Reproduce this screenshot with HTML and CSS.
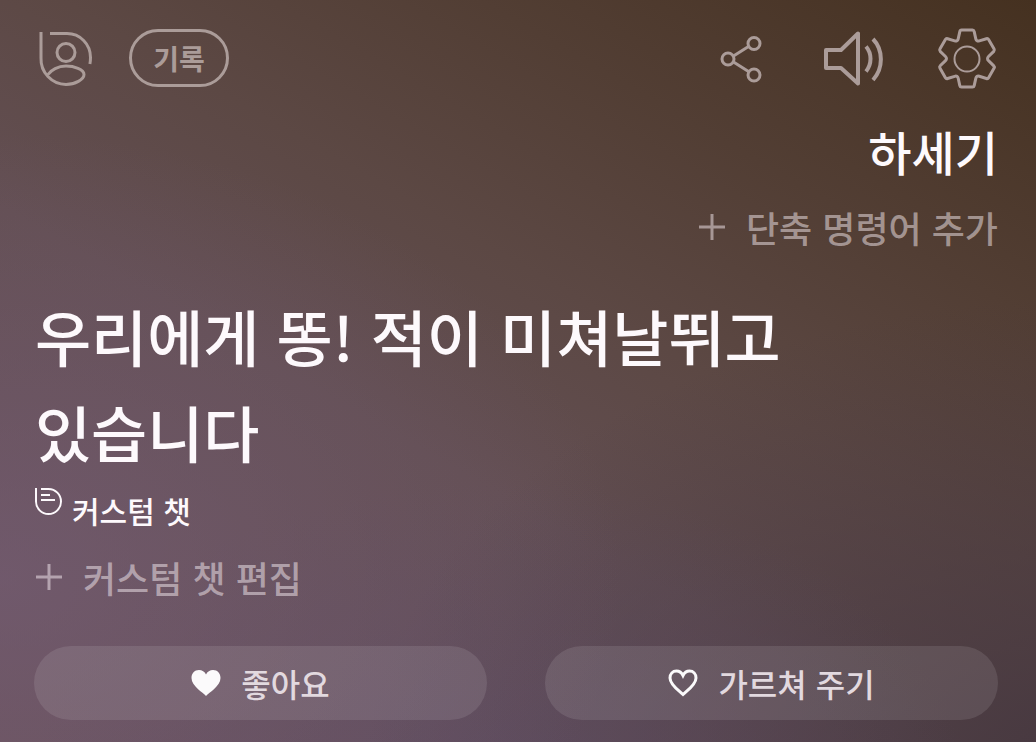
FILE: index.html
```html
<!DOCTYPE html>
<html lang="ko">
<head>
<meta charset="utf-8">
<meta name="viewport" content="width=device-width, initial-scale=1">
<title>커스텀 챗</title>
<link rel="stylesheet" href="styles.css">
</head>
<body>
<main class="screen">
  <header class="topbar">
    <div class="topbar-group">
      <button class="icon-button" type="button" aria-label="프로필">
        <svg width="56" height="60" viewBox="0 0 56 60" class="line">
          <path d="M3 4V30a25.500 25.500 0 0 0 25 26.500c9 0 18-5 18-10S36 38 28 38s-15 4-18 8.500"/>
          <path d="M12 5.500h17c13 0 23.500 10.500 23.500 24 0 2.500-.2 4.500-.6 6.500"/>
          <circle cx="28" cy="24.500" r="9"/>
        </svg>
      </button>
      <button class="history" type="button">기록</button>
    </div>
    <div class="topbar-group topbar-actions">
      <button class="icon-button" type="button" aria-label="공유">
        <svg width="48" height="60" viewBox="0 0 48 60" class="line">
          <circle cx="8" cy="31" r="6"/>
          <circle cx="34" cy="15.500" r="6"/>
          <circle cx="34" cy="47" r="6"/>
          <path d="M13.500 28 28.500 18.500M13.500 34l15 9.500"/>
        </svg>
      </button>
      <button class="icon-button" type="button" aria-label="소리">
        <svg width="62" height="60" viewBox="0 0 62 60" class="line speaker">
          <path d="M4 22h15L36 5.500v50L19 40H4z"/>
          <path d="M44 18.500c6 7 6 17.500 0 25M51 11c10.500 11 10.500 29.500 0 41"/>
        </svg>
      </button>
      <button class="icon-button" type="button" aria-label="설정">
        <svg width="60" height="60" viewBox="1 0 60 60" class="line">
          <path d="M24.500 2h11c1 0 1.500.7 1.700 1.600l1.600 7.300c.4 1.800 1.700 2.600 3.500 2l7.100-2.200c1-.3 1.700 0 2.200.8l5.500 9.600c.5.900.4 1.600-.3 2.300l-5.300 5.100c-1.300 1.300-1.300 3 0 4.200l5.300 5.100c.7.700.8 1.500.3 2.300l-5.500 9.600c-.5.900-1.200 1.100-2.200.8l-7.100-2.200c-1.800-.6-3.100.2-3.500 2l-1.600 7.300c-.2.900-.7 1.500-1.700 1.500h-11c-1 0-1.500-.6-1.700-1.500l-1.600-7.300c-.4-1.800-1.700-2.600-3.500-2l-7.100 2.200c-1 .3-1.700 0-2.200-.8l-5.500-9.600c-.5-.9-.4-1.600.3-2.300l5.300-5.100c1.300-1.300 1.300-3 0-4.200l-5.300-5.100c-.7-.7-.8-1.500-.3-2.300l5.500-9.600c.5-.9 1.200-1.100 2.200-.8l7.100 2.200c1.800.6 3.100-.2 3.500-2l1.600-7.300c.2-.9.700-1.600 1.700-1.600z"/>
          <circle class="hub" cx="30" cy="31" r="12.500"/>
        </svg>
      </button>
    </div>
  </header>

  <section class="query">
    <p class="query-text">하세기</p>
    <button class="add" type="button">
      <svg width="28" height="28" viewBox="0 0 28 28" class="plus"><path d="M14 1v26M1 14h26"/></svg>
      단축 명령어 추가
    </button>
  </section>

  <section class="answer">
    <h1 class="answer-text">우리에게 똥! 적이 미쳐날뛰고 있습니다</h1>
    <p class="source">
      <svg width="27" height="28" viewBox="0 0 27 28" class="badge">
        <path d="M1 0v13.500a12.500 12.500 0 1 0 12.500-12.500H6M6 7h9M6 12h14"/>
      </svg>
      <span class="source-name">커스텀 챗</span>
    </p>
    <button class="add" type="button">
      <svg width="28" height="28" viewBox="0 0 28 28" class="plus"><path d="M14 1v26M1 14h26"/></svg>
      커스텀 챗 편집
    </button>
  </section>

  <footer class="feedback">
    <button class="pill" type="button">
      <svg width="30" height="28" viewBox="0 0 30 28" class="heart heart-full"><path d="M15 27C12 23.500.5 17 .5 9 .5 4.500 3.500 1 8 1c3 0 5.700 1.500 7 4.500C16.300 2.500 19 1 22 1c4.500 0 7.500 3.500 7.500 8 0 8-11.500 14.500-14.500 18z"/></svg>
      좋아요
    </button>
    <button class="pill" type="button">
      <svg width="30" height="28" viewBox="0 0 30 28" class="heart"><path d="M15 25.500C12 22.500 2 16 2 9c0-4 2.700-7 6.500-7 3 0 5.200 1.800 6.500 4.500C16.300 3.800 18.500 2 21.500 2 25.300 2 28 5 28 9c0 7-10 13.500-13 16.500z"/></svg>
      가르쳐 주기
    </button>
  </footer>
</main>
</body>
</html>
```
FILE: styles.css
```css
* {
  box-sizing: border-box;
}

body {
  margin: 0;
  font-family: "Noto Sans CJK KR", sans-serif;
  font-weight: 500;
  color: #fdf9fc;
}

button {
  margin: 0;
  padding: 0;
  border: 0;
  background: none;
  font: inherit;
  color: inherit;
  cursor: pointer;
}

p,
h1 {
  margin: 0;
}

svg {
  display: block;
  flex: none;
  overflow: visible;
  fill: none;
  stroke: currentColor;
}

.screen {
  display: flex;
  flex-direction: column;
  min-height: 100vh;
  padding: 28px 38px 22px 34px;
  background:
    radial-gradient(ellipse 60% 60% at 0% 78%, rgba(118, 94, 120, 0.6), rgba(118, 94, 120, 0)),
    radial-gradient(ellipse 45% 40% at 48% 105%, rgba(92, 76, 102, 0.6), rgba(92, 76, 102, 0)),
    radial-gradient(ellipse 70% 65% at 105% 105%, rgba(68, 54, 62, 0.95), rgba(68, 54, 62, 0)),
    linear-gradient(210deg, #453120 0%, #523e34 24%, #5c4844 42%, #634f53 60%, #69525b 100%);
}

.topbar,
.topbar-group,
.add,
.source,
.feedback,
.pill {
  display: flex;
}

.topbar {
  justify-content: space-between;
  color: #ab9c99;
}

.topbar-group {
  align-items: center;
  gap: 35px;
  padding-left: 4px;
}

.topbar-actions {
  gap: 54px;
}

.line {
  stroke-width: 3;
}

.speaker {
  stroke-width: 4;
  stroke-linejoin: round;
}

.hub {
  stroke-width: 2;
}

.history {
  width: 100px;
  height: 58px;
  border: 3px solid currentColor;
  border-radius: 29px;
  font-size: 28px;
  font-weight: 700;
  line-height: 48px;
}

.query {
  display: flex;
  flex-direction: column;
  align-items: flex-end;
  margin-top: 28px;
}

.query-text {
  font-size: 47px;
  line-height: 70px;
}

.add {
  align-items: center;
  gap: 20px;
  font-size: 36px;
  line-height: 54px;
  color: rgba(255, 245, 250, 0.48);
}

.query .add {
  margin-top: 14px;
}

.plus {
  stroke-width: 3;
}

.answer {
  display: flex;
  flex-direction: column;
  align-items: flex-start;
  margin-top: 34px;
  padding-left: 1px;
}

.answer-text {
  max-width: 800px;
  font-size: 61px;
  font-weight: 500;
  line-height: 96px;
  word-break: keep-all;
}

.source {
  gap: 10px;
  margin-top: 8px;
}

.source-name {
  font-size: 30px;
  line-height: 44px;
}

.badge {
  stroke-width: 2;
}

.answer .add {
  margin-top: 18px;
}

.feedback {
  gap: 58px;
  margin-top: auto;
}

.pill {
  flex: 1;
  align-items: center;
  justify-content: center;
  gap: 20px;
  height: 74px;
  border-radius: 37px;
  background: rgba(255, 255, 255, 0.1);
  font-size: 32px;
  line-height: 70px;
  color: #e2d9df;
}

.heart {
  stroke-width: 3;
  color: #fbfafb;
}

.heart-full {
  fill: currentColor;
  stroke: none;
}
```
